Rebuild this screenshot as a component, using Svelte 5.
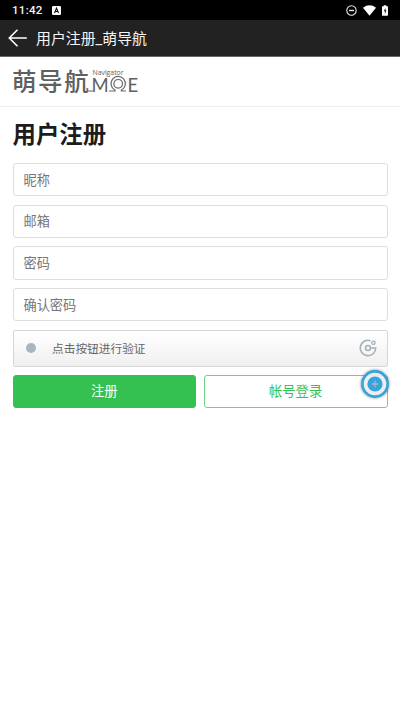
<script lang="ts">
	interface Field {
		name: string;
		label: string;
		type: string;
	}

	const fields: Field[] = [
		{ name: 'nickname', label: '昵称', type: 'text' },
		{ name: 'email', label: '邮箱', type: 'email' },
		{ name: 'password', label: '密码', type: 'password' },
		{ name: 'confirm', label: '确认密码', type: 'password' }
	];

	let values = $state<Record<string, string>>({ nickname: '', email: '', password: '', confirm: '' });
</script>

<div class="screen">
	<div class="status-bar">
		<span class="time">11:42</span>
		<svg class="app-badge" width="9" height="9" viewBox="0 0 9 9">
			<rect width="9" height="9" rx="1.2" fill="#fff" />
			<path d="M2.5 7 4.5 2.2 6.5 7M3.3 5.5h2.4" fill="none" stroke="#111" stroke-width="1.1" />
		</svg>
		<div class="status-icons">
			<svg width="11" height="11" viewBox="0 0 11 11" fill="none" stroke="#e8e8e8" stroke-width="1.1">
				<circle cx="5.5" cy="5.5" r="4.7" />
				<path d="M3 5.5h5" stroke-width="1.4" />
			</svg>
			<svg width="13" height="11" viewBox="0 0 13 11">
				<path d="M0 2.7Q6.5-2.2 13 2.7L6.5 10.8z" fill="#fff" />
			</svg>
			<svg width="6" height="11" viewBox="0 0 7 12">
				<path d="M2 0h3v1h1.2q.8 0 .8.8v9.4q0 .8-.8.8H.8Q0 12 0 11.2V1.8Q0 1 .8 1H2z" fill="#fff" />
				<path d="M4.2 3 2 6.7h1.3V10L5.2 6H4z" fill="#111" />
			</svg>
		</div>
	</div>

	<div class="toolbar">
		<svg class="back" width="20" height="18" viewBox="0 0 20 18" fill="none" stroke="#fff" stroke-width="1.6">
			<path d="M9.5.8 1.3 9l8.2 8.2M1.3 9h17.5" />
		</svg>
		<span>用户注册_萌导航</span>
	</div>

	<header class="site-header">
		<svg class="logo" width="130" height="36" viewBox="0 0 130 36">
			<text class="logo-name" x="0" y="26.5">萌导航</text>
			<text class="logo-small" x="80.5" y="11" textLength="31" lengthAdjust="spacingAndGlyphs">Navigator</text>
			<text class="logo-moe" x="79.5" y="27.5">M</text>
			<text class="logo-moe" x="115.5" y="27.5">E</text>
			<g fill="none" stroke="#666" stroke-width="1.2">
				<path d="M75 27h6M97 27h6v-.9a7.2 7.2 0 1 1 6.4 0v.9h4.6" />
				<circle cx="106.2" cy="19.8" r="4.3" />
			</g>
		</svg>
	</header>

	<main>
		<h1>用户注册</h1>
		<form onsubmit={(e) => e.preventDefault()}>
			{#each fields as field}
				<input type={field.type} name={field.name} placeholder={field.label} bind:value={values[field.name]} />
			{/each}

			<div class="captcha">
				<span class="dot"></span>
				<span class="captcha-text">点击按钮进行验证</span>
				<svg width="18" height="18" viewBox="0 0 18 18" fill="none" stroke="#a4b1b7" stroke-width="1.6">
					<path d="M11.5 1.7A7.7 7.7 0 1 0 16.7 9H11.5" />
					<circle cx="9" cy="9" r="2.5" />
					<circle cx="14.4" cy="3.8" r="1.7" stroke-width="1.3" />
				</svg>
			</div>

			<div class="actions">
				<button class="primary" type="submit">注册</button>
				<button class="outline" type="button">帐号登录</button>
			</div>
		</form>
	</main>

	<div class="float-ball">
		<svg width="34" height="34" viewBox="0 0 34 34">
			<circle cx="17" cy="17" r="12.6" fill="#fff" fill-opacity=".85" stroke="#35a4dc" stroke-width="2.6" />
			<circle cx="17" cy="17" r="7.6" fill="#35a4dc" />
			<path d="M17 13.8v6.4M13.8 17h6.4" stroke="#a7b8c0" stroke-width="1.3" />
		</svg>
	</div>
</div>

<style>
	:global(body) {
		background: #fff;
	}

	.screen {
		position: relative;
		width: 400px;
		height: 711px;
		overflow: hidden;
		background: #fff;
		font-family: Roboto, 'Noto Sans CJK SC', sans-serif;
	}

	.status-bar {
		display: flex;
		align-items: center;
		box-sizing: border-box;
		height: 20px;
		padding: 0 12px;
		background: #000;
		color: #f4f4f4;
	}

	.time {
		width: 40px;
		font-size: 11.5px;
		font-weight: 500;
		letter-spacing: 0.3px;
	}

	.status-icons {
		display: flex;
		align-items: center;
		gap: 6px;
		margin-left: auto;
	}

	.toolbar {
		display: flex;
		align-items: center;
		gap: 8px;
		box-sizing: border-box;
		height: 37px;
		padding-left: 8px;
		border-bottom: 1px solid #666;
		background: #222;
		color: #f5f5f5;
		font-size: 14.9px;
	}

	.toolbar span {
		padding-bottom: 2px;
	}

	.site-header {
		display: flex;
		align-items: center;
		box-sizing: border-box;
		height: 50px;
		padding-left: 12px;
		border-bottom: 1px solid #eee;
	}

	.logo {
		overflow: visible;
	}

	.logo text {
		fill: #606060;
	}

	.logo .logo-name {
		font-family: 'Noto Sans CJK SC', sans-serif;
		font-size: 24.5px;
		font-weight: 500;
		letter-spacing: 1.6px;
	}

	.logo .logo-small {
		font-family: 'Open Sans', sans-serif;
		font-size: 6.5px;
	}

	.logo .logo-moe {
		font-family: Lato, sans-serif;
		font-size: 18.5px;
		font-weight: 400;
	}

	main {
		padding: 11px 12.5px 0;
	}

	h1 {
		margin: 0 0 10px;
		color: #1c1c1c;
		font-size: 23.4px;
		font-weight: 700;
		line-height: 35px;
	}

	form {
		display: flex;
		flex-direction: column;
		gap: 8.3px;
	}

	input {
		box-sizing: border-box;
		width: 100%;
		height: 33.4px;
		padding: 1px 10px 0;
		border: 1px solid #dedede;
		border-radius: 3px;
		outline: none;
		background: #fff;
		font: inherit;
		font-size: 13.2px;
	}

	input::placeholder {
		color: #757575;
		opacity: 1;
	}

	.captcha {
		display: flex;
		align-items: center;
		box-sizing: border-box;
		height: 37px;
		padding: 0 9.5px 0 12.5px;
		border: 1px solid #d6d6d6;
		border-radius: 2px;
		background: linear-gradient(#fff, #f0f0f0);
	}

	.dot {
		width: 10px;
		height: 10px;
		margin-right: 16px;
		border-radius: 50%;
		background: #aab6bd;
	}

	.captcha-text {
		flex: 1;
		padding-bottom: 2px;
		color: #666;
		font-size: 11.7px;
	}

	.actions {
		display: grid;
		grid-template-columns: 1fr 1fr;
		gap: 7.5px;
	}

	button {
		box-sizing: border-box;
		height: 33.4px;
		padding: 0 0 2px;
		border: 1px solid #35c152;
		border-radius: 3px;
		font: inherit;
		font-size: 13.3px;
	}

	.primary {
		background: #35c152;
		color: #fff;
	}

	.outline {
		border-color: #6bd580;
		background: #fff;
		color: #35c152;
	}

	.float-ball {
		position: absolute;
		top: 367px;
		left: 358px;
		width: 34px;
		height: 34px;
		filter: drop-shadow(0 0 1.5px rgba(0, 0, 0, 0.5));
	}
</style>
